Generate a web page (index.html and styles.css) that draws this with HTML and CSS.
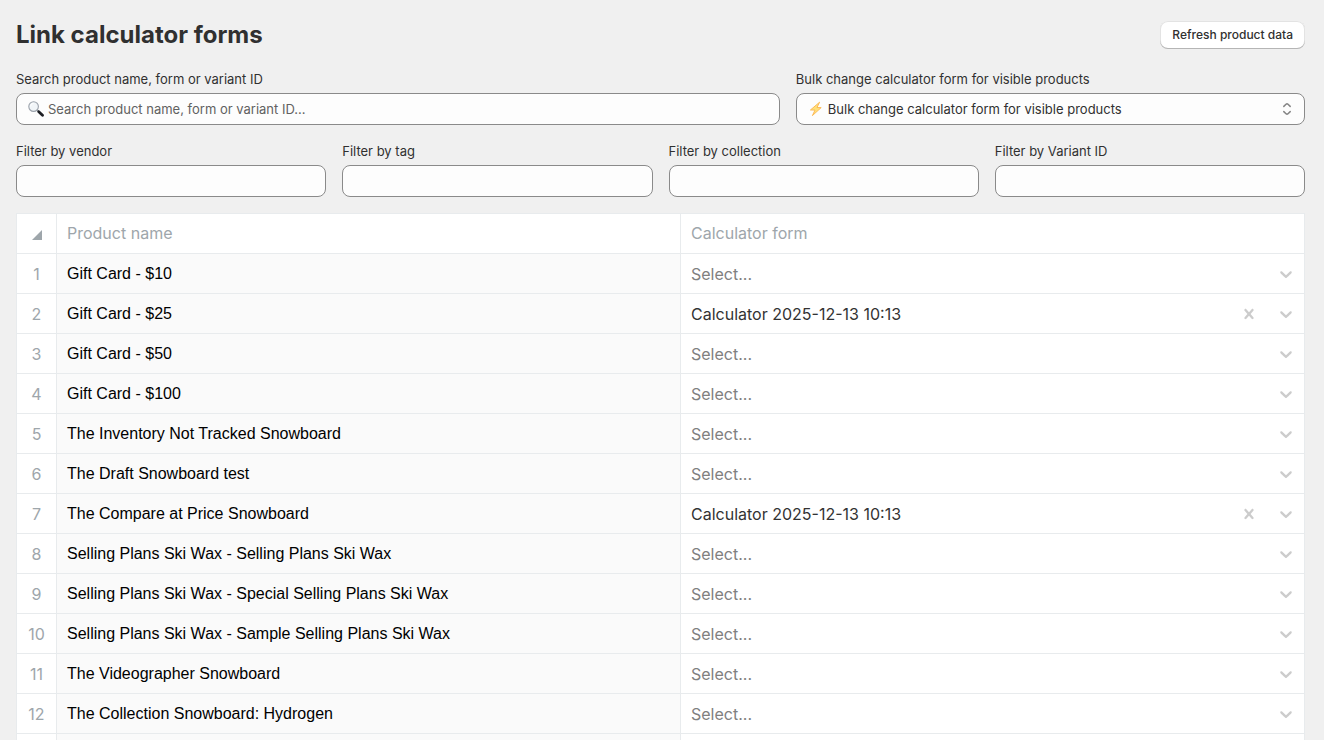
FILE: index.html
```html
<!DOCTYPE html>
<html lang="en">

<head>
    <meta charset="UTF-8">
    <meta name="viewport" content="width=device-width, initial-scale=1.0">
    <title>Link calculator forms</title>
    <link rel="stylesheet" href="styles.css">
</head>

<body>
    <svg width="0" height="0" class="sprite">
        <symbol id="chevron" viewBox="0 0 20 20">
            <path d="M4.516 7.548c0.436-0.446 1.043-0.481 1.576 0l3.908 3.747 3.908-3.747c0.533-0.481 1.141-0.446 1.574 0 0.436 0.445 0.408 1.197 0 1.615-0.406 0.418-4.695 4.502-4.695 4.502-0.217 0.223-0.502 0.335-0.787 0.335s-0.57-0.112-0.789-0.335c0 0-4.287-4.084-4.695-4.502s-0.436-1.17 0-1.615z" />
        </symbol>
        <symbol id="cross" viewBox="0 0 20 20">
            <path d="M14.348 14.849c-0.469 0.469-1.229 0.469-1.697 0l-2.651-3.030-2.651 3.029c-0.469 0.469-1.229 0.469-1.697 0-0.469-0.469-0.469-1.229 0-1.697l2.758-3.15-2.759-3.152c-0.469-0.469-0.469-1.228 0-1.697s1.228-0.469 1.697 0l2.652 3.031 2.651-3.031c0.469-0.469 1.228-0.469 1.697 0s0.469 1.229 0 1.697l-2.758 3.152 2.758 3.15c0.469 0.469 0.469 1.229 0 1.698z" />
        </symbol>
    </svg>

    <div class="page">
        <header class="header">
            <h1>Link calculator forms</h1>
            <button type="button" class="button">Refresh product data</button>
        </header>

        <div class="search-row">
            <div class="field">
                <label for="search">Search product name, form or variant ID</label>
                <div class="control">
                    <svg class="icon-left" viewBox="0 0 16 16">
                        <path d="M9.3 9.3l2 1.6" stroke="#70757d" stroke-width="1.6" />
                        <path d="M10.8 10.8l3.7 3.5" stroke="#1d1f24" stroke-width="2.8" stroke-linecap="round" />
                        <circle cx="5.6" cy="5.6" r="4.8" fill="#f1f5f8" stroke="#9aa1aa" stroke-width="1.1" />
                        <path d="M2.6 5.4a3 3 0 0 1 3-3" fill="none" stroke="#fff" stroke-width="1" />
                    </svg>
                    <input type="text" id="search" class="with-icon" placeholder="Search product name, form or variant ID...">
                </div>
            </div>
            <div class="field">
                <label for="bulk">Bulk change calculator form for visible products</label>
                <div class="control">
                    <svg class="icon-left" viewBox="0 0 16 16">
                        <path d="M11.6 1.2L2.4 9l4.6.1L4.4 14.6l8.8-8-4.2-.1z" fill="#ffe07a" stroke="#fbb54e" stroke-width=".9" stroke-linejoin="round" />
                    </svg>
                    <select id="bulk" class="with-icon">
                        <option>Bulk change calculator form for visible products</option>
                        <option>Calculator 2025-12-13 10:13</option>
                    </select>
                    <svg class="icon-right" viewBox="0 0 16 16">
                        <path d="M4.8 5.4L7 3.3q1-.9 2 0l2.2 2.1M4.8 10.6L7 12.7q1 .9 2 0l2.2-2.1" fill="none" stroke="#858585" stroke-width="1.5" stroke-linecap="round" stroke-linejoin="round" />
                    </svg>
                </div>
            </div>
        </div>

        <div class="filter-row">
            <div class="field">
                <label for="vendor">Filter by vendor</label>
                <input type="text" id="vendor">
            </div>
            <div class="field">
                <label for="tag">Filter by tag</label>
                <input type="text" id="tag">
            </div>
            <div class="field">
                <label for="collection">Filter by collection</label>
                <input type="text" id="collection">
            </div>
            <div class="field">
                <label for="variant">Filter by Variant ID</label>
                <input type="text" id="variant">
            </div>
        </div>

        <table class="sheet">
            <thead>
                <tr>
                    <th class="gutter"><svg class="corner" viewBox="0 0 10 10"><path d="M10 0v10H0z" /></svg></th>
                    <th>Product name</th>
                    <th>Calculator form</th>
                </tr>
            </thead>
            <tbody id="rows"></tbody>
        </table>
    </div>

    <script src="script.js"></script>
</body>

</html>
```
FILE: styles.css
```css
* {
    box-sizing: border-box;
}

body {
    font-family: Inter, sans-serif;
    font-size: 13px;
    line-height: 20px;
    background-color: #f0f0f0;
    color: #303030;
    margin: 0;
}

.sprite {
    position: absolute;
}

.page {
    padding: 20px 19px 0 16px;
}

.header {
    display: flex;
    justify-content: space-between;
    align-items: center;
    margin-bottom: 19px;
}

h1 {
    font-size: 24px;
    font-weight: 700;
    line-height: 30px;
    margin: 0;
}

.button {
    height: 28px;
    padding: 0 12px 2px;
    border: 0;
    border-radius: 8px;
    background-color: #fff;
    color: #303030;
    font-family: inherit;
    font-size: 12px;
    font-weight: 500;
    box-shadow: inset 0 -1px 0 #b5b5b5, inset 0 0 0 1px #e3e3e3;
    cursor: pointer;
}

.search-row,
.filter-row {
    display: grid;
    gap: 16px;
    margin-bottom: 16px;
}

.search-row {
    grid-template-columns: 3fr 2fr;
}

.filter-row {
    grid-template-columns: repeat(4, 1fr);
}

.field {
    display: flex;
    flex-direction: column;
    gap: 4px;
}

.control {
    position: relative;
}

.field input,
.field select {
    display: block;
    width: 100%;
    height: 32px;
    padding: 0 12px;
    border: 1px solid #8a8a8a;
    border-radius: 8px;
    background-color: #fdfdfd;
    color: #303030;
    font-family: inherit;
    font-size: 13px;
    appearance: none;
}

.field .with-icon {
    padding-left: 31px;
}

.field input::placeholder {
    color: #616161;
}

.icon-left,
.icon-right {
    position: absolute;
    top: 8px;
    width: 16px;
    height: 16px;
    pointer-events: none;
}

.icon-left {
    left: 12px;
}

.icon-right {
    right: 10px;
}

.sheet {
    width: 100%;
    table-layout: fixed;
    border-collapse: separate;
    border-spacing: 0;
    border-top: 1px solid #e8ebed;
    border-left: 1px solid #e8ebed;
    background-color: #fff;
    font-size: 16px;
    line-height: 24px;
}

.sheet th,
.sheet td {
    height: 40px;
    padding: 0 10px;
    border-right: 1px solid #e8ebed;
    border-bottom: 1px solid #e8ebed;
    text-align: left;
    font-weight: 400;
}

.sheet th {
    color: #9ea6ab;
}

.sheet thead th {
    padding-bottom: 1px;
}

.sheet .gutter {
    width: 40px;
    padding: 0;
    text-align: center;
}

.sheet tbody .gutter {
    padding-top: 1px;
}

.corner {
    width: 10px;
    height: 10px;
    fill: #9ea6ab;
}

.sheet .name {
    background-color: #fafafa;
    color: #000;
    font-family: "Liberation Sans", Arial, sans-serif;
}

.sheet .form {
    position: relative;
    padding: 0;
}

.form select {
    display: block;
    width: 100%;
    height: 39px;
    padding: 1px 80px 0 10px;
    border: 0;
    background-color: transparent;
    color: #333;
    font-family: inherit;
    font-size: 16px;
    appearance: none;
}

.form .empty {
    color: #808080;
}

.form svg {
    display: block;
    width: 20px;
    height: 20px;
    fill: #ccc;
}

.form .chevron {
    position: absolute;
    top: 10px;
    right: 8px;
    pointer-events: none;
}

.clear {
    position: absolute;
    top: 10px;
    right: 45px;
    padding: 0;
    border: 0;
    background: none;
    cursor: pointer;
}
```
FILE: script.js
```js
const FORM = 'Calculator 2025-12-13 10:13';

const products = [
    { name: 'Gift Card - $10' },
    { name: 'Gift Card - $25', linked: true },
    { name: 'Gift Card - $50' },
    { name: 'Gift Card - $100' },
    { name: 'The Inventory Not Tracked Snowboard' },
    { name: 'The Draft Snowboard test' },
    { name: 'The Compare at Price Snowboard', linked: true },
    { name: 'Selling Plans Ski Wax - Selling Plans Ski Wax' },
    { name: 'Selling Plans Ski Wax - Special Selling Plans Ski Wax' },
    { name: 'Selling Plans Ski Wax - Sample Selling Plans Ski Wax' },
    { name: 'The Videographer Snowboard' },
    { name: 'The Collection Snowboard: Hydrogen' },
    { name: '' }
];

function renderRow(product, index) {
    const linked = product.linked;
    return `
        <tr>
            <th class="gutter" scope="row">${product.name ? index + 1 : ''}</th>
            <td class="name">${product.name}</td>
            <td class="form">
                ${product.name ? `
                <select class="${linked ? '' : 'empty'}" aria-label="Calculator form for ${product.name}">
                    <option ${linked ? '' : 'selected'}>Select...</option>
                    <option ${linked ? 'selected' : ''}>${FORM}</option>
                </select>
                ${linked ? '<button type="button" class="clear" aria-label="Clear"><svg><use href="#cross"/></svg></button>' : ''}
                <svg class="chevron"><use href="#chevron"/></svg>` : ''}
            </td>
        </tr>`;
}

document.getElementById('rows').innerHTML = products.map(renderRow).join('');
```
